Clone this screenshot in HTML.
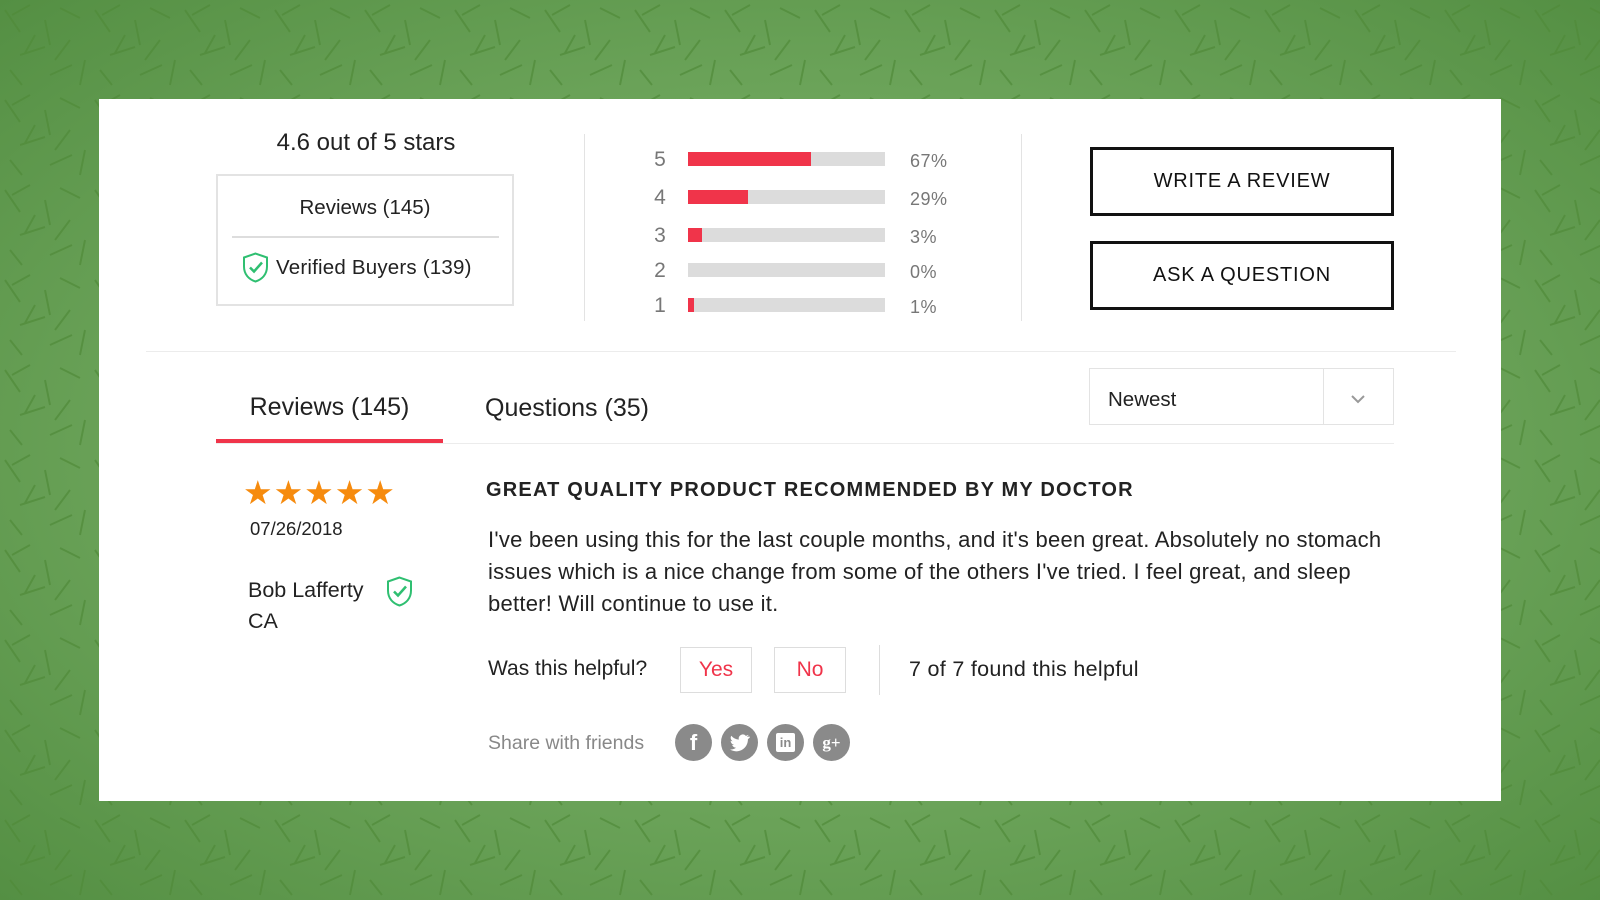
<!DOCTYPE html>
<html><head><meta charset="utf-8"><style>
*{margin:0;padding:0;box-sizing:border-box}
html,body{width:1600px;height:900px;overflow:hidden}
body{font-family:"Liberation Sans",sans-serif;color:#222;position:relative;background:radial-gradient(ellipse at center,#78b066 0%,#6ca45a 55%,#548f43 100%)}
#bg{position:absolute;left:0;top:0}
.a{position:absolute;white-space:nowrap}
.card{position:absolute;left:99px;top:99px;width:1402px;height:702px;background:#fff}
.bar{position:absolute;left:688px;width:197px;height:14px;background:#dcdcdc}
.bar i{display:block;height:14px;background:#f0344a}
.num{position:absolute;left:652px;width:16px;text-align:center;font-size:21px;color:#777}
.pct{position:absolute;left:910px;font-size:18px;color:#777;letter-spacing:.5px}
.btn{position:absolute;left:1090px;width:304px;height:69px;border:3px solid #111;font-size:20px;letter-spacing:.8px;display:flex;align-items:center;justify-content:center;color:#111}
.hb{position:absolute;top:647px;width:72px;height:46px;border:1px solid #ddd;color:#f0344a;font-size:21px;display:flex;align-items:center;justify-content:center}
.ic{position:absolute;top:724px;width:37px;height:37px;border-radius:50%;background:#8a8a8a;color:#fff;display:flex;align-items:center;justify-content:center;font-weight:bold}
</style></head><body>
<svg id="bg" width="1600" height="900"><defs><pattern id="p" width="90" height="90" patternUnits="userSpaceOnUse"><g stroke="#4f8a38" stroke-width="2" opacity=".7"><path d="M5 10l15 22M30 5l-18 10M45 20l5 25M60 8l20 10M70 40l-15 20M20 55l25-8M10 70l12 15M50 75l22-10M85 60l-5 25M35 35l-10 18"/></g></pattern></defs><rect width="1600" height="900" fill="url(#p)"/></svg>
<div class="card"></div>
<div class="a" style="left:216px;top:129px;width:300px;text-align:center;font-size:24px;color:#222">4.6 out of 5 stars</div>
<div class="a" style="left:216px;top:174px;width:298px;height:132px;border:2px solid #e3e3e3"></div>
<div class="a" style="left:216px;top:196px;width:298px;text-align:center;font-size:20.5px">Reviews (145)</div>
<div class="a" style="left:232px;top:236px;width:267px;height:2px;background:#ddd"></div>
<svg class="a" style="left:241px;top:251px" width="29" height="33" viewBox="0 0 29 32"><path d="M14.5 2L3 6v9c0 8 5 13 11.5 15C21 28 26 23 26 15V6z" fill="none" stroke="#2fbf71" stroke-width="2"/><path d="M9 16l4 4 8-9" fill="none" stroke="#2fbf71" stroke-width="2.5"/></svg>
<div class="a" style="left:276px;top:256px;font-size:20.5px;letter-spacing:.2px">Verified Buyers (139)</div>
<div class="a" style="left:584px;top:134px;width:1px;height:187px;background:#e3e3e3"></div>
<div class="a" style="left:1021px;top:134px;width:1px;height:187px;background:#e3e3e3"></div>
<div class="num" style="top:148px">5</div><div class="bar" style="top:152px"><i style="width:123px"></i></div><div class="pct" style="top:151px">67%</div>
<div class="num" style="top:186px">4</div><div class="bar" style="top:190px"><i style="width:60px"></i></div><div class="pct" style="top:189px">29%</div>
<div class="num" style="top:224px">3</div><div class="bar" style="top:228px"><i style="width:14px"></i></div><div class="pct" style="top:227px">3%</div>
<div class="num" style="top:259px">2</div><div class="bar" style="top:263px"></div><div class="pct" style="top:262px">0%</div>
<div class="num" style="top:294px">1</div><div class="bar" style="top:298px"><i style="width:6px"></i></div><div class="pct" style="top:297px">1%</div>
<div class="btn" style="top:147px">WRITE A REVIEW</div>
<div class="btn" style="top:241px">ASK A QUESTION</div>
<div class="a" style="left:146px;top:351px;width:1310px;height:1px;background:#ececec"></div>
<div class="a" style="left:216px;top:393px;width:227px;text-align:center;font-size:25px;color:#222">Reviews (145)</div>
<div class="a" style="left:485px;top:394px;font-size:25px;color:#222">Questions (35)</div>
<div class="a" style="left:216px;top:443px;width:1178px;height:1px;background:#ececec"></div>
<div class="a" style="left:216px;top:439px;width:227px;height:4px;background:#f0344a"></div>
<div class="a" style="left:1089px;top:368px;width:305px;height:57px;border:1px solid #e3e3e3"></div>
<div class="a" style="left:1323px;top:368px;width:1px;height:57px;background:#e3e3e3"></div>
<div class="a" style="left:1108px;top:388px;font-size:20.5px">Newest</div>
<svg class="a" style="left:1350px;top:394px" width="16" height="10"><path d="M2 2l6 6 6-6" fill="none" stroke="#999" stroke-width="2"/></svg>
<div class="a" style="left:243px;top:473px;font-size:33px;color:#f68b0e;letter-spacing:1px">★★★★★</div>
<div class="a" style="left:250px;top:518px;font-size:18.5px">07/26/2018</div>
<div class="a" style="left:248px;top:578px;font-size:21.5px">Bob Lafferty</div>
<svg class="a" style="left:385px;top:575px" width="29" height="33" viewBox="0 0 29 32"><path d="M14.5 2L3 6v9c0 8 5 13 11.5 15C21 28 26 23 26 15V6z" fill="none" stroke="#2fbf71" stroke-width="2"/><path d="M9 16l4 4 8-9" fill="none" stroke="#2fbf71" stroke-width="2.5"/></svg>
<div class="a" style="left:248px;top:609px;font-size:21.5px">CA</div>
<div class="a" style="left:486px;top:479px;font-size:20px;font-weight:bold;letter-spacing:1.2px;color:#222">GREAT QUALITY PRODUCT RECOMMENDED BY MY DOCTOR</div>
<div class="a" style="left:488px;top:524px;font-size:22px;line-height:31.8px;letter-spacing:.25px;color:#222">I've been using this for the last couple months, and it's been great. Absolutely no stomach<br>issues which is a nice change from some of the others I've tried. I feel great, and sleep<br>better! Will continue to use it.</div>
<div class="a" style="left:488px;top:657px;font-size:21px">Was this helpful?</div>
<div class="hb" style="left:680px">Yes</div>
<div class="hb" style="left:774px">No</div>
<div class="a" style="left:879px;top:645px;width:1px;height:50px;background:#ddd"></div>
<div class="a" style="left:909px;top:657px;font-size:21.5px;letter-spacing:.3px">7 of 7 found this helpful</div>
<div class="a" style="left:488px;top:732px;font-size:19.5px;color:#888">Share with friends</div>
<div class="ic" style="left:675px;font-size:22px;font-family:'Liberation Sans'">f</div>
<div class="ic" style="left:721px"><svg width="20" height="18" viewBox="0 0 24 20"><path d="M23 2c-1 .5-2 .7-3 .8 1-.6 2-1.6 2.3-2.7-1 .6-2 1-3.2 1.3A5 5 0 0 0 10.6 6 14 14 0 0 1 1.5 1.3a5 5 0 0 0 1.5 6.6c-.8 0-1.6-.3-2.2-.6 0 2.4 1.7 4.4 4 4.9-.7.2-1.5.2-2.2.1.6 2 2.5 3.4 4.6 3.4A10 10 0 0 1 0 17.7 14 14 0 0 0 7.5 20C16.5 20 21.5 12.5 21.5 6V5.4c1-.7 1.8-1.6 2.5-2.5z" fill="#fff"/></svg></div>
<div class="ic" style="left:767px"><div style="width:19px;height:19px;background:#fff;border-radius:2px;color:#8a8a8a;font-size:13px;line-height:20px;text-align:center">in</div></div>
<div class="ic" style="left:813px;font-size:17px;font-family:'Liberation Serif'">g+</div>
</body></html>
